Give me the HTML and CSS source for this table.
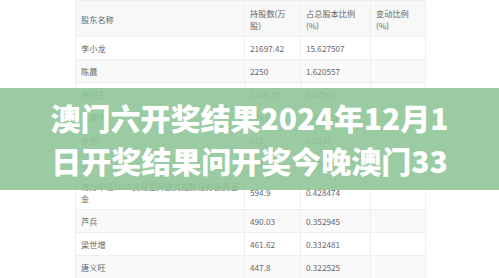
FILE: index.html
```html
<!DOCTYPE html>
<html lang="zh-CN">
<head>
<meta charset="utf-8">
<title>股东</title>
<link rel="stylesheet" href="styles.css">
</head>
<body>
<div class="page">
  <table class="holders">
    <colgroup>
      <col class="c-name"><col class="c-shares"><col class="c-ratio"><col class="c-change">
    </colgroup>
    <thead>
      <tr><th>股东名称</th><th>持股数(万<br>股)</th><th>占总股本比例<br>(%)</th><th>变动比例<br>(%)</th></tr>
    </thead>
    <tbody>
      <tr><td>李小龙</td><td>21697.42</td><td>15.627507</td><td></td></tr>
      <tr><td>陈晨</td><td>2250</td><td>1.620557</td><td></td></tr>
      <tr><td>黄明生</td><td>1215.79</td><td>0.87567</td><td></td></tr>
      <tr><td>曹晏中</td><td>671.9</td><td>0.484158</td><td></td></tr>
      <tr><td>张彤</td><td>810</td><td>0.5834</td><td></td></tr>
      <tr><td>王洪</td><td>556.7</td><td>0.40095</td><td></td></tr>
      <tr><td>南方中证1000交易型开放式指数证券投资基<br>金</td><td>594.9</td><td>0.428474</td><td></td></tr>
      <tr><td>芦兵</td><td>490.03</td><td>0.352945</td><td></td></tr>
      <tr><td>梁世增</td><td>461.62</td><td>0.332481</td><td></td></tr>
      <tr><td>唐义旺</td><td>447.8</td><td>0.322525</td><td></td></tr>
    </tbody>
  </table>
  <div class="banner">
    <p class="banner-title">澳门六开奖结果2024年12月1<br>日开奖结果问开奖今晚澳门33</p>
  </div>
</div>
</body>
</html>
```

FILE: styles.css
```css
html, body {
  margin: 0;
  padding: 0;
  background: #ffffff;
}
.page {
  position: relative;
  width: 499px;
  height: 278px;
  overflow: hidden;
}
.holders {
  margin-left: 75px;
  width: 350px;
  border-collapse: collapse;
  table-layout: fixed;
  font-family: "Noto Sans CJK SC", "Noto Sans", sans-serif;
  font-size: 8.2px;
  line-height: 12px;
  color: #666666;
}
.c-name { width: 169px; }
.c-shares { width: 56px; }
.c-ratio { width: 70px; }
.c-change { width: 55px; }
.holders th,
.holders td {
  text-align: left;
  font-weight: normal;
  padding: 5px 5px;
  border: 1px solid #efefef;
  vertical-align: middle;
  white-space: nowrap;
}
.holders th {
  padding-top: 6px;
  padding-bottom: 5px;
  background: #f8f8f8;
}
.holders tbody tr:nth-child(even) td {
  background: #f9f9f9;
}
.banner {
  position: absolute;
  left: 0;
  top: 88px;
  width: 499px;
  height: 102px;
  background: rgba(143, 197, 152, 0.9);
  display: flex;
  align-items: center;
  justify-content: center;
}
.banner-title {
  margin: 0;
  text-align: center;
  color: #ffffff;
  font-family: "Noto Sans CJK SC", sans-serif;
  font-weight: 900;
  font-size: 30px;
  line-height: 43px;
}
```
